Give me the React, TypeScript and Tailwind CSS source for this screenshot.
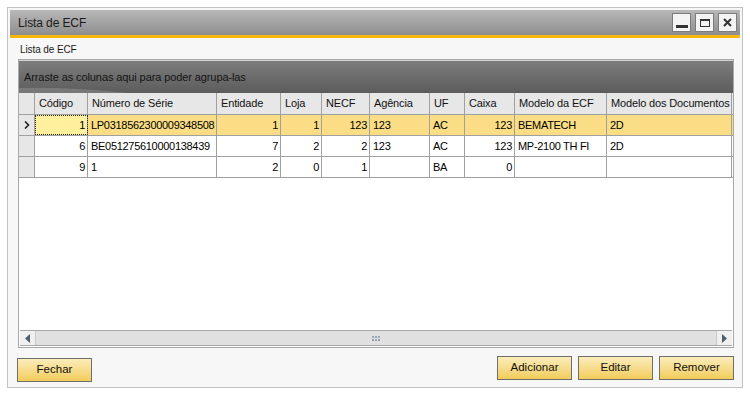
import React from 'react';

interface Column {
  key: string;
  label: string;
  width: number;
  align: 'left' | 'right';
}

const columns: Column[] = [
  { key: 'codigo', label: 'Código', width: 53, align: 'right' },
  { key: 'serie', label: 'Número de Série', width: 129, align: 'left' },
  { key: 'entidade', label: 'Entidade', width: 64, align: 'right' },
  { key: 'loja', label: 'Loja', width: 41, align: 'right' },
  { key: 'necf', label: 'NECF', width: 48, align: 'right' },
  { key: 'agencia', label: 'Agência', width: 60, align: 'left' },
  { key: 'uf', label: 'UF', width: 35, align: 'left' },
  { key: 'caixa', label: 'Caixa', width: 50, align: 'right' },
  { key: 'modelo', label: 'Modelo da ECF', width: 92, align: 'left' },
  { key: 'docs', label: 'Modelo dos Documentos', width: 125, align: 'left' },
];

const rows: Record<string, string>[] = [
  { codigo: '1', serie: 'LP0318562300009348508', entidade: '1', loja: '1', necf: '123', agencia: '123', uf: 'AC', caixa: '123', modelo: 'BEMATECH', docs: '2D' },
  { codigo: '6', serie: 'BE051275610000138439', entidade: '7', loja: '2', necf: '2', agencia: '123', uf: 'AC', caixa: '123', modelo: 'MP-2100 TH FI', docs: '2D' },
  { codigo: '9', serie: '1', entidade: '2', loja: '0', necf: '1', agencia: '', uf: 'BA', caixa: '0', modelo: '', docs: '' },
];

function YellowButton({ label }: { label: string }) {
  return (
    <button className="w-[75px] h-[24px] border border-[#6e6e6e] bg-gradient-to-b from-[#fbedb9] to-[#f2cc58] text-[11.5px] text-[#111]">
      {label}
    </button>
  );
}

function TitleButton({ children }: { children: React.ReactNode }) {
  return (
    <div className="w-[19px] h-[19px] border border-[#7c7c7c] bg-[#f4f4f4] flex items-center justify-center">
      {children}
    </div>
  );
}

export default function App() {
  return (
    <div className="w-[750px] h-[395px] bg-white p-[7px]" style={{ fontFamily: '"Liberation Sans", Arial, sans-serif' }}>
      <div className="h-[381px] border border-[#c2c2c2] p-[2px] flex flex-col bg-[#f7f7f7]">
        {/* Title bar */}
        <div className="h-[25px] bg-gradient-to-b from-[#b8b8b8] to-[#8e8e8e] flex items-center justify-between pl-[8px] pr-[3px]">
          <span className="text-[12px] tracking-[-0.1px] text-[#1a1a1a]">Lista de ECF</span>
          <div className="flex gap-[4px]">
            <TitleButton>
              <div className="w-[12px] h-[3px] bg-[#333] mt-[8px]" />
            </TitleButton>
            <TitleButton>
              <div className="w-[10px] h-[8px] border border-[#333] border-t-[2px]" />
            </TitleButton>
            <TitleButton>
              <svg width="9" height="9" viewBox="0 0 9 9">
                <path d="M1 1 L8 8 M8 1 L1 8" stroke="#333" strokeWidth="2" />
              </svg>
            </TitleButton>
          </div>
        </div>
        <div className="h-[3px] bg-[#f8b80a]" />

        {/* Content */}
        <div className="flex-1 flex flex-col px-[8px]">
          <div className="h-[21px] flex items-center text-[10px] tracking-[-0.1px] text-[#1a1a1a] pl-[2px] pt-[2px]">Lista de ECF</div>

          {/* Grid */}
          <div className="w-[716px] h-[289px] border border-[#a8a8a8] bg-white flex flex-col">
            <div className="relative h-[33px] bg-gradient-to-b from-[#7d7d7d] to-[#5c5c5c] border-t border-[#d0d0d0] flex items-center pl-[5px] overflow-hidden">
              <svg className="absolute left-0 bottom-0" width="120" height="12" viewBox="0 0 120 12">
                <path d="M0 12 L0 7 Q50 6 110 12 Z" fill="#8a8a8a" opacity="0.6" />
              </svg>
              <span className="relative text-[11px] tracking-[-0.1px] text-[#141414]">Arraste as colunas aqui para poder agrupa-las</span>
            </div>

            {/* header */}
            <div className="flex h-[22px] bg-[#e7e7e7] border-b border-[#a0a0a0]">
              <div className="w-[16px] border-r border-[#a0a0a0]" />
              {columns.map((c) => (
                <div key={c.key} style={{ width: c.width }} className="border-r border-[#a0a0a0] text-[11px] tracking-[-0.15px] text-[#111] flex items-center pl-[4px] whitespace-nowrap overflow-hidden">
                  {c.label}
                </div>
              ))}
            </div>

            {/* rows */}
            {rows.map((r, i) => (
              <div key={i} className={`flex h-[21px] border-b border-[#a0a0a0] ${i === 0 ? 'bg-[#fbdd86]' : 'bg-white'}`}>
                <div className="w-[16px] border-r border-[#a0a0a0] bg-[#e7e7e7] flex items-center justify-center">
                  {i === 0 && (
                    <svg width="6" height="8" viewBox="0 0 6 8">
                      <path d="M1 0.5 L4.5 4 L1 7.5" fill="none" stroke="#222" strokeWidth="1.6" />
                    </svg>
                  )}
                </div>
                {columns.map((c, ci) => (
                  <div
                    key={c.key}
                    style={{ width: c.width }}
                    className={`border-r border-[#a0a0a0] text-[11px] tracking-[-0.3px] text-[#000] flex items-center whitespace-nowrap overflow-hidden ${
                      c.align === 'right' ? 'justify-end pr-[2px]' : 'pl-[3px]'
                    } ${i === 0 && ci === 0 ? 'bg-[#fff09e] outline outline-1 outline-dotted outline-[#222] -outline-offset-1' : ''}`}
                  >
                    {r[c.key]}
                  </div>
                ))}
              </div>
            ))}

            <div className="flex-1" />

            {/* horizontal scrollbar */}
            <div className="h-[16px] flex bg-[#e0e0e0] border-t border-[#a8a8a8] border-b mx-[1px] mb-[1px]">
              <div className="w-[16px] bg-[#f0f0f0] border-r border-[#c8c8c8] flex items-center justify-center">
                <svg width="5" height="9" viewBox="0 0 5 9"><path d="M5 0 L0 4.5 L5 9 Z" fill="#4e5f70" /></svg>
              </div>
              <div className="flex-1 flex items-center justify-center">
                <svg width="9" height="5" viewBox="0 0 9 5">
                  <rect x="0" y="0" width="2" height="2" fill="#9aa4ae" />
                  <rect x="3" y="0" width="2" height="2" fill="#9aa4ae" />
                  <rect x="6" y="0" width="2" height="2" fill="#9aa4ae" />
                  <rect x="0" y="3" width="2" height="2" fill="#9aa4ae" />
                  <rect x="3" y="3" width="2" height="2" fill="#9aa4ae" />
                  <rect x="6" y="3" width="2" height="2" fill="#9aa4ae" />
                </svg>
              </div>
              <div className="w-[16px] bg-[#f0f0f0] border-l border-[#c8c8c8] flex items-center justify-center">
                <svg width="5" height="9" viewBox="0 0 5 9"><path d="M0 0 L5 4.5 L0 9 Z" fill="#4e5f70" /></svg>
              </div>
            </div>
          </div>

          {/* buttons */}
          <div className="flex justify-between mt-[8px]">
            <div className="-ml-[1px]">
              <YellowButton label="Fechar" />
            </div>
            <div className="flex gap-[6px] -mr-[2px]">
              <YellowButton label="Adicionar" />
              <YellowButton label="Editar" />
              <YellowButton label="Remover" />
            </div>
          </div>
        </div>
      </div>
    </div>
  );
}
